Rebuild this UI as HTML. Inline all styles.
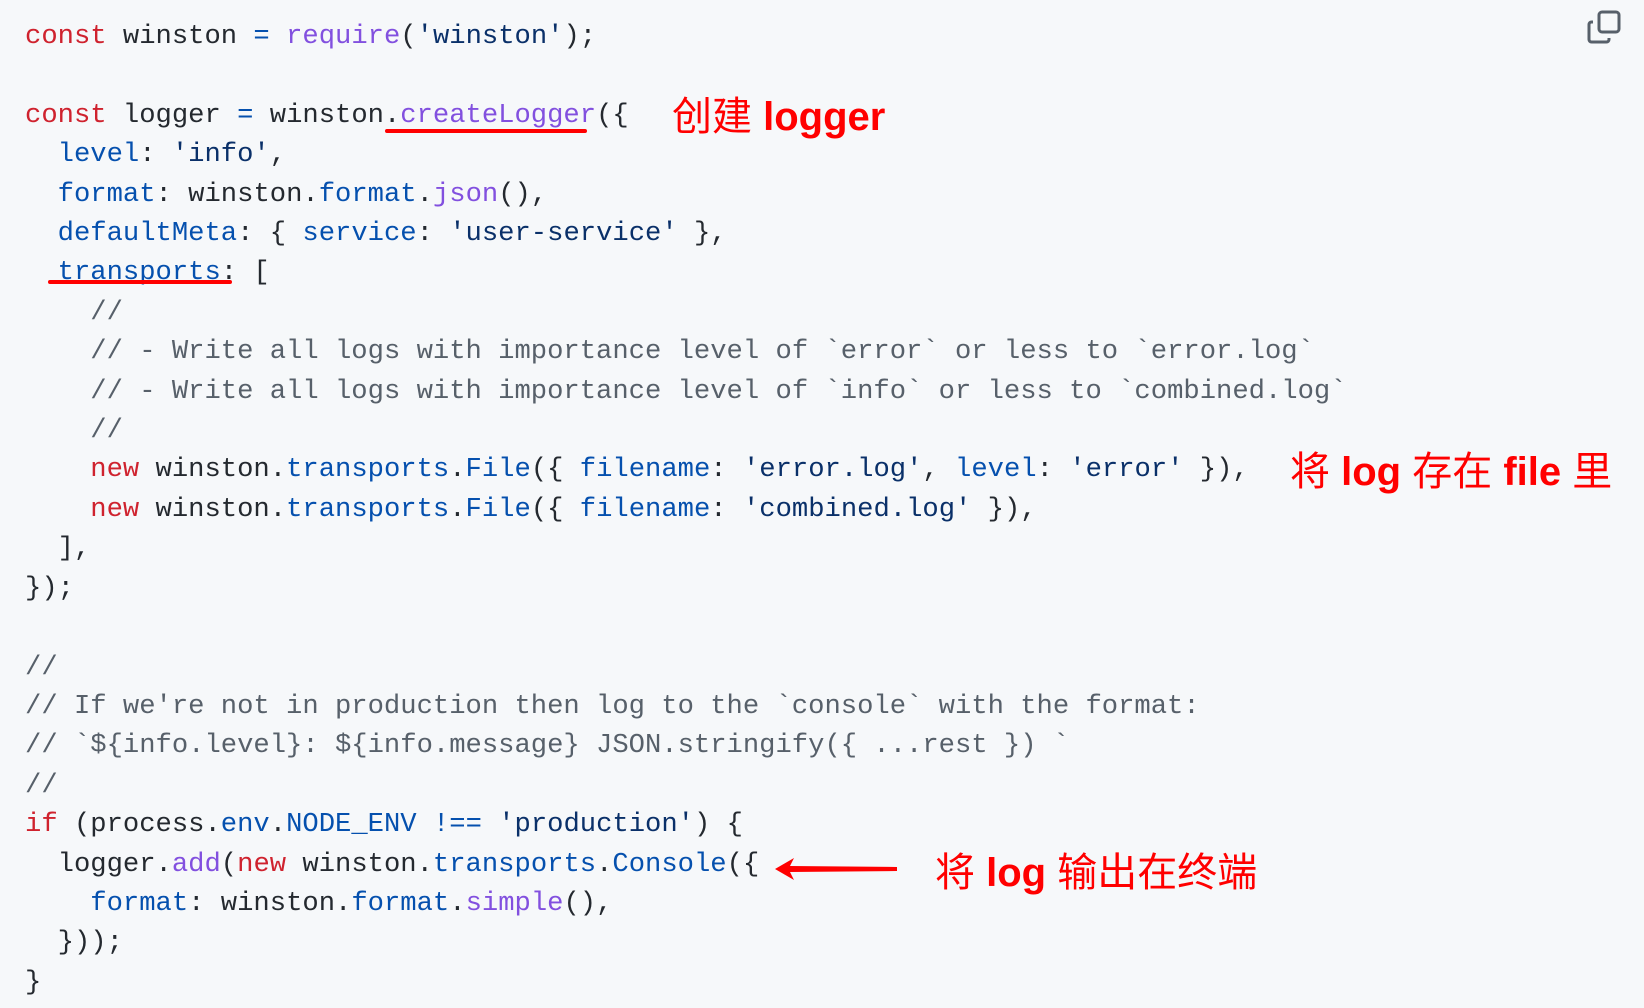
<!DOCTYPE html>
<html><head><meta charset="utf-8"><style>
html,body{margin:0;padding:0;background:#f6f8fa;width:1644px;height:1008px;overflow:hidden;position:relative}
pre{position:absolute;left:25px;top:17px;margin:0;font-family:"Liberation Mono",monospace;font-size:27.2px;line-height:39.4px;color:#24292f}
.k{color:#cf222e}.b{color:#0550ae}.p{color:#8250df}.s{color:#0a3069}.c{color:#57606a}
.a{position:absolute;color:#ff0000;font-family:"Liberation Sans","Noto Sans CJK SC",sans-serif;font-size:40px;line-height:48px;white-space:nowrap}
.a b{font-weight:bold}
.u{position:absolute;background:#ff0000;height:4px;border-radius:2px}
</style></head><body>
<pre><span class="k">const</span> winston <span class="b">=</span> <span class="p">require</span>(<span class="s">'winston'</span>);

<span class="k">const</span> logger <span class="b">=</span> winston.<span class="p">createLogger</span>({
  <span class="b">level</span>: <span class="s">'info'</span>,
  <span class="b">format</span>: winston.<span class="b">format</span>.<span class="p">json</span>(),
  <span class="b">defaultMeta</span>: { <span class="b">service</span>: <span class="s">'user-service'</span> },
  <span class="b">transports</span>: [
    <span class="c">//</span>
    <span class="c">// - Write all logs with importance level of `error` or less to `error.log`</span>
    <span class="c">// - Write all logs with importance level of `info` or less to `combined.log`</span>
    <span class="c">//</span>
    <span class="k">new</span> winston.<span class="b">transports</span>.<span class="b">File</span>({ <span class="b">filename</span>: <span class="s">'error.log'</span>, <span class="b">level</span>: <span class="s">'error'</span> }),
    <span class="k">new</span> winston.<span class="b">transports</span>.<span class="b">File</span>({ <span class="b">filename</span>: <span class="s">'combined.log'</span> }),
  ],
});

<span class="c">//</span>
<span class="c">// If we're not in production then log to the `console` with the format:</span>
<span class="c">// `${info.level}: ${info.message} JSON.stringify({ ...rest }) `</span>
<span class="c">//</span>
<span class="k">if</span> (process.<span class="b">env</span>.<span class="b">NODE_ENV</span> <span class="b">!==</span> <span class="s">'production'</span>) {
  logger.<span class="p">add</span>(<span class="k">new</span> winston.<span class="b">transports</span>.<span class="b">Console</span>({
    <span class="b">format</span>: winston.<span class="b">format</span>.<span class="p">simple</span>(),
  }));
}</pre>
<div class="u" style="left:385px;top:129px;width:202px"></div>
<div class="u" style="left:48px;top:280px;width:184px"></div>
<div class="a" style="left:672px;top:93px">创建 <b>logger</b></div>
<div class="a" style="left:1290px;top:448px">将 <b>log</b> 存在 <b>file</b> 里</div>
<div class="a" style="left:935px;top:849px">将 <b>log</b> 输出在终端</div>
<svg style="position:absolute;left:770px;top:855px" width="130" height="30"><polygon points="5,14 24,3 20,11 127,12 127,16 20,17 24,25" fill="#ff0000"/></svg>
<svg style="position:absolute;left:1585px;top:8px" width="40" height="40" fill="none" stroke="#57606a" stroke-width="3"><rect x="14" y="4" width="20" height="20" rx="3"/><path d="M8 14h-1.5a2.5 2.5 0 0 0-2.5 2.5v15a2.5 2.5 0 0 0 2.5 2.5h15a2.5 2.5 0 0 0 2.5-2.5V30"/></svg>
</body></html>
